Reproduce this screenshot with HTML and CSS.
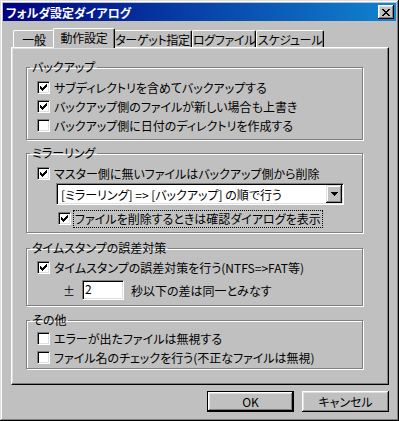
FILE: index.html
```html
<!DOCTYPE html>
<html lang="ja">
<head>
    <meta charset="UTF-8">
    <title>フォルダ設定ダイアログ</title>
    <link rel="stylesheet" href="styles.css">
</head>
<body>
    <div class="window">
        <div class="titlebar">
            <span class="title">フォルダ設定ダイアログ</span>
            <button class="close">
                <svg width="8" height="7" viewBox="0 0 8 7" shape-rendering="crispEdges">
                    <path d="M0 0h2v1H0zM6 0h2v1H6zM1 1h2v1H1zM5 1h2v1H5zM2 2h4v1H2zM3 3h2v1H3zM2 4h4v1H2zM1 5h2v1H1zM5 5h2v1H5zM0 6h2v1H0zM6 6h2v1H6z" fill="#000"/>
                </svg>
            </button>
        </div>

        <div class="dialog">
            <div class="tabs">
                <div class="tab tab-general">一般</div>
                <div class="tab tab-action active">動作設定</div>
                <div class="tab tab-target">ターゲット指定</div>
                <div class="tab tab-log">ログファイル</div>
                <div class="tab tab-schedule">スケジュール</div>
            </div>

            <div class="panel">
                <!-- バックアップ -->
                <fieldset class="group group-backup">
                    <legend>バックアップ</legend>
                    <label class="row"><span class="cb checked"></span>サブディレクトリを含めてバックアップする</label>
                    <label class="row"><span class="cb checked"></span>バックアップ側のファイルが新しい場合も上書き</label>
                    <label class="row"><span class="cb"></span>バックアップ側に日付のディレクトリを作成する</label>
                </fieldset>

                <!-- ミラーリング -->
                <fieldset class="group group-mirror">
                    <legend>ミラーリング</legend>
                    <label class="row"><span class="cb checked"></span>マスター側に無いファイルはバックアップ側から削除</label>
                    <div class="combo">
                        <span>[ミラーリング] =&gt; [バックアップ] の順で行う</span>
                        <span class="combo-btn">
                            <svg width="7" height="4" viewBox="0 0 7 4" shape-rendering="crispEdges">
                                <path d="M0 0h7v1H0zM1 1h5v1H1zM2 2h3v1H2zM3 3h1v1H3z" fill="#000"/>
                            </svg>
                        </span>
                    </div>
                    <label class="row sub"><span class="cb checked"></span><span class="focus">ファイルを削除するときは確認ダイアログを表示</span></label>
                </fieldset>

                <!-- タイムスタンプ -->
                <fieldset class="group group-stamp">
                    <legend>タイムスタンプの誤差対策</legend>
                    <label class="row"><span class="cb checked"></span>タイムスタンプの誤差対策を行う(NTFS=&gt;FAT等)</label>
                    <div class="offset-row">
                        <span class="pm">±</span>
                        <div class="edit">2</div>
                        <span>秒以下の差は同一とみなす</span>
                    </div>
                </fieldset>

                <!-- その他 -->
                <fieldset class="group group-other">
                    <legend>その他</legend>
                    <label class="row"><span class="cb"></span>エラーが出たファイルは無視する</label>
                    <label class="row"><span class="cb"></span>ファイル名のチェックを行う(不正なファイルは無視)</label>
                </fieldset>
            </div>

            <div class="buttons">
                <button class="btn default">OK</button>
                <button class="btn">キャンセル</button>
            </div>
        </div>
    </div>
</body>
</html>
```

FILE: styles.css
```css
body {
    margin: 0;
    font-family: "Noto Sans CJK JP", "Liberation Sans", sans-serif;
    font-size: 12px;
    font-feature-settings: "palt";
    color: #000;
}

.window {
    width: 399px;
    height: 421px;
    box-sizing: border-box;
    padding: 3px;
    background-color: #c0c0c0;
    box-shadow: inset -1px -1px #000, inset 1px 1px #dfdfdf, inset -2px -2px #808080, inset 2px 2px #fff;
}

.titlebar {
    height: 18px;
    display: flex;
    align-items: center;
    justify-content: space-between;
    padding: 0 2px 0 3px;
    background: linear-gradient(to right, #000080, #1084d0);
}

.title {
    color: #fff;
    font-weight: bold;
    font-size: 12px;
}

.close {
    width: 16px;
    height: 14px;
    padding: 0;
    border: none;
    display: flex;
    align-items: center;
    justify-content: center;
    background-color: #c0c0c0;
    box-shadow: inset -1px -1px #000, inset 1px 1px #fff, inset -2px -2px #808080, inset 2px 2px #dfdfdf;
}

.dialog {
    padding: 7px 7px 0 8px;
}

/* tabs */
.tabs {
    display: flex;
    align-items: flex-end;
    height: 19px;
    padding-left: 2px;
}

.tab {
    flex: none;
    height: 17px;
    box-sizing: border-box;
    display: flex;
    align-items: center;
    justify-content: center;
    white-space: nowrap;
    letter-spacing: -0.3px;
    border-top: 1px solid #fff;
    border-left: 1px solid #fff;
    border-right: 1px solid #000;
    border-radius: 2px 2px 0 0;
    box-shadow: inset -1px 0 #808080;
    background-color: #c0c0c0;
}

.tab-general { width: 42px; }
.tab-action { width: 62px; }
.tab-target { width: 79px; }
.tab-log { width: 64px; }
.tab-schedule { width: 68px; }

.tab.active {
    height: 20px;
    margin: 0 -2px -1px;
    padding-bottom: 2px;
    position: relative;
    z-index: 1;
}

.panel {
    height: 338px;
    box-sizing: border-box;
    border: 1px solid;
    border-color: #fff #000 #000 #fff;
    box-shadow: inset -1px -1px #808080, inset 1px 1px #dfdfdf;
    padding: 12px 0 0 14px;
}

/* group boxes */
.group {
    width: 337px;
    box-sizing: border-box;
    margin: 0;
    padding: 4px 0 4px 10px;
    border: 1px solid #808080;
    box-shadow: 1px 1px #fff, inset 1px 1px #fff;
    min-inline-size: auto;
}

.group legend {
    padding: 0 2px;
    margin-left: -7px;
    line-height: 14px;
}

.group-mirror {
    margin-top: 6px;
}

.group-stamp {
    margin-top: 8px;
    padding-top: 3px;
    padding-bottom: 5px;
}

.group-other {
    margin-top: 7px;
    padding-top: 2px;
    padding-bottom: 1px;
}

.row {
    display: flex;
    align-items: center;
    gap: 4px;
    height: 19px;
    white-space: nowrap;
}

.row.sub {
    margin-left: 21px;
    margin-top: 4px;
}

.focus {
    outline: 1px dotted #000;
    outline-offset: 1px;
    line-height: 14px;
}

/* checkbox */
.cb {
    width: 13px;
    height: 13px;
    flex: none;
    box-sizing: border-box;
    background-color: #fff;
    border: 1px solid;
    border-color: #808080 #fff #fff #808080;
    box-shadow: inset 1px 1px #000, inset -1px -1px #dfdfdf;
}

.cb.checked {
    background-image: url("data:image/svg+xml,%3Csvg xmlns='http://www.w3.org/2000/svg' width='11' height='11' shape-rendering='crispEdges'%3E%3Cpath d='M2 4h1v3H2zM3 5h1v3H3zM4 6h1v3H4zM5 5h1v3H5zM6 4h1v3H6zM7 3h1v3H7zM8 2h1v3H8z' fill='%23000'/%3E%3C/svg%3E");
    background-repeat: no-repeat;
}

/* combo box */
.combo {
    margin-left: 19px;
    width: 288px;
    height: 22px;
    box-sizing: border-box;
    display: flex;
    align-items: center;
    justify-content: space-between;
    padding: 1px 1px 1px 4px;
    background-color: #fff;
    border: 1px solid;
    border-color: #808080 #fff #fff #808080;
    box-shadow: inset 1px 1px #000, inset -1px -1px #dfdfdf;
}

.combo-btn {
    width: 16px;
    height: 18px;
    display: flex;
    align-items: center;
    justify-content: center;
    background-color: #c0c0c0;
    box-shadow: inset -1px -1px #000, inset 1px 1px #dfdfdf, inset -2px -2px #808080, inset 2px 2px #fff;
}

/* offset edit row */
.offset-row {
    display: flex;
    align-items: center;
    margin-top: 3px;
    padding-left: 26px;
}

.edit {
    width: 42px;
    height: 20px;
    box-sizing: border-box;
    margin: 0 7px 0 7px;
    padding-left: 2px;
    line-height: 16px;
    background-color: #fff;
    border: 1px solid;
    border-color: #808080 #fff #fff #808080;
    box-shadow: inset 1px 1px #000, inset -1px -1px #dfdfdf;
}

/* buttons */
.buttons {
    display: flex;
    justify-content: flex-end;
    gap: 8px;
    margin-top: 6px;
}

.btn {
    width: 87px;
    height: 21px;
    box-sizing: border-box;
    border: none;
    padding: 0;
    font-family: inherit;
    font-size: 12px;
    font-feature-settings: "palt";
    color: #000;
    background-color: #c0c0c0;
    box-shadow: inset -1px -1px #000, inset 1px 1px #fff, inset -2px -2px #808080, inset 2px 2px #dfdfdf;
}

.btn.default {
    border: 1px solid #000;
}
```
